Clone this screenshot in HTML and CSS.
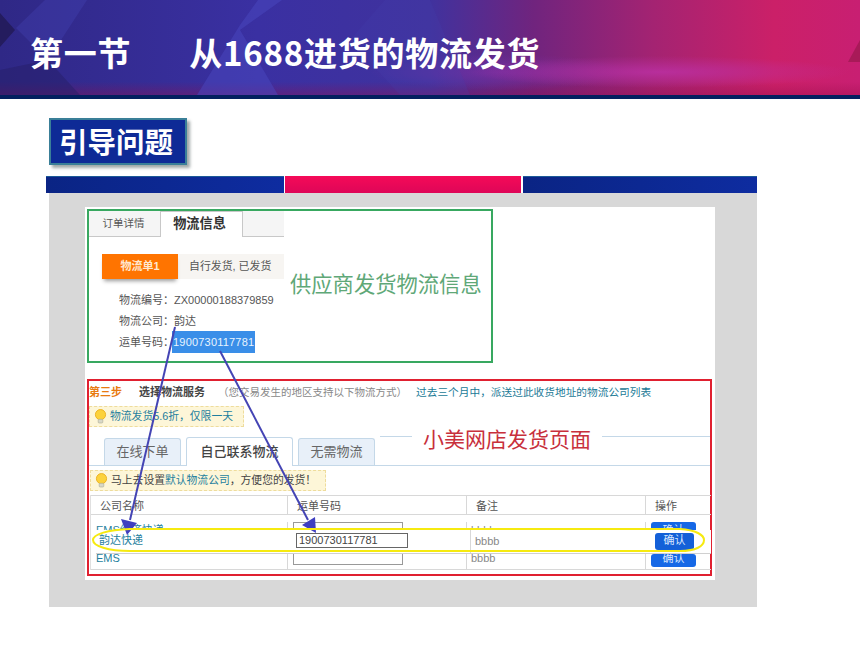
FILE: index.html
```html
<!DOCTYPE html>
<html lang="zh-CN">

<head>
  <meta charset="utf-8">
  <title>从1688进货的物流发货</title>
  <link rel="stylesheet" href="styles.css">
</head>

<body>
  <header class="banner">
    <svg class="banner-art" viewBox="0 0 860 95" preserveAspectRatio="none">
      <polygon points="0,13 15,30 0,47" fill="#241c5e" />
      <polygon points="16,28 45,0 87,0 48,60" fill="#4a48bc" opacity="0.3" />
      <polygon points="48,60 80,95 0,95 0,70" fill="#251d68" opacity="0.5" />
      <polygon points="258,0 240,25 197,95 278,95 240,30 282,0" fill="#4a48c0" opacity="0.5" />
      <polygon points="385,0 430,0 470,95 400,95 350,40" fill="#4642b0" opacity="0.2" />
      <polygon points="860,40 860,62 848,62" fill="#a81a58" />
    </svg>
    <h1 class="banner-title"><span class="banner-no">第一节</span>从1688进货的物流发货</h1>
  </header>

  <div class="tag">引导问题</div>

  <div class="strip">
    <div class="strip-blue"></div>
    <div class="strip-red"></div>
    <div class="strip-blue strip-last"></div>
  </div>

  <main class="panel">
    <div class="shot">
      <section class="supplier">
        <div class="order">
          <div class="order-tabs">
            <div class="order-tab">订单详情</div>
            <div class="order-tab order-tab-on">物流信息</div>
            <div class="order-tab-rest"></div>
          </div>
          <div class="waybill">
            <div class="waybill-no">物流单1</div>
            <div class="waybill-state">自行发货, 已发货</div>
          </div>
          <div class="info">物流编号：ZX00000188379859</div>
          <div class="info">物流公司：韵达</div>
          <div class="info">运单号码：<span class="picked">1900730117781</span></div>
        </div>
        <div class="note-green">供应商发货物流信息</div>
      </section>

      <section class="shop">
        <div class="step">
          <b class="step-no">第三步</b>
          <b class="step-name">选择物流服务</b>
          <span class="step-hint">（您交易发生的地区支持以下物流方式）</span>
          <span class="step-link">过去三个月中，派送过此收货地址的物流公司列表</span>
        </div>

        <div class="tip tip-first">
          <svg class="bulb" viewBox="0 0 14 16"><circle cx="7" cy="6" r="5.5" fill="#fcd23c" stroke="#eab020" /><rect x="4.5" y="11" width="5" height="4" rx="1" fill="#d8d8c8" stroke="#a8a890" stroke-width="0.6" /></svg>
          <span class="teal">物流发货5.6折，仅限一天</span>
        </div>

        <div class="ship-tabs">
          <div class="ship-tab">在线下单</div>
          <div class="ship-tab ship-tab-on">自己联系物流</div>
          <div class="ship-tab">无需物流</div>
          <div class="caption">
            <div class="caption-line caption-short"></div>
            <div class="note-red">小美网店发货页面</div>
            <div class="caption-line"></div>
          </div>
        </div>

        <div class="tip tip-second">
          <svg class="bulb" viewBox="0 0 14 16"><circle cx="7" cy="6" r="5.5" fill="#fcd23c" stroke="#eab020" /><rect x="4.5" y="11" width="5" height="4" rx="1" fill="#d8d8c8" stroke="#a8a890" stroke-width="0.6" /></svg>
          <span>马上去设置<span class="teal">默认物流公司</span>，方便您的发货！</span>
        </div>

        <div class="table">
          <div class="row row-head">
            <div>公司名称</div>
            <div>运单号码</div>
            <div>备注</div>
            <div>操作</div>
          </div>
          <div class="row row-top">
            <div class="teal">EMS经济快递</div>
            <div><div class="field"></div></div>
            <div>bbbb</div>
            <div><div class="confirm">确认</div></div>
          </div>
          <div class="row-pasted">
            <div class="teal">韵达快递</div>
            <div><div class="field field-on">1900730117781</div></div>
            <div class="pasted-note">bbbb</div>
            <div><div class="confirm confirm-on">确认</div></div>
          </div>
          <div class="row row-end">
            <div class="teal">EMS</div>
            <div><div class="field"></div></div>
            <div>bbbb</div>
            <div><div class="confirm">确认</div></div>
          </div>
        </div>
      </section>

      <svg class="marks" viewBox="85 207 630 373">
        <path d="M175 327 L130 520" class="arrow-line" />
        <polygon points="127,535 121,519 137,523" class="arrow-head" />
        <path d="M220 351 L308 520" class="arrow-line" />
        <polygon points="316,533 302,525 315,517" class="arrow-head" />
        <path d="M130 529 L680 529 C696 530 704 535 704 540 C704 546 696 551 680 551 L130 551 C108 551 93 546 93 540 C93 534 108 530 130 529 Z" class="ring" />
      </svg>
    </div>
  </main>
</body>
</html>
```

FILE: styles.css
```css
body {
  margin: 0;
  padding: 0;
  background: #fff;
  font-family: "Noto Sans CJK SC", "Liberation Sans", sans-serif;
  overflow: hidden;
}

/* top banner */
.banner {
  position: relative;
  box-sizing: border-box;
  height: 99px;
  border-bottom: 4px solid #03205f;
  background:
    radial-gradient(ellipse 190px 16px at 660px 72px, rgba(190, 50, 170, 0.75), transparent),
    radial-gradient(ellipse 130px 18px at 500px 72px, rgba(130, 50, 170, 0.6), transparent),
    linear-gradient(180deg, transparent 86%, rgba(150, 10, 70, 0.35) 100%),
    linear-gradient(90deg, #2f2886 0%, #3a30a2 30%, #40329e 50%, #70247e 62%, #a42372 76%, #cb2068 90%, #c81f72 100%);
}
.banner-art {
  position: absolute;
  left: 0;
  top: 0;
  width: 860px;
  height: 95px;
}
.banner-title {
  position: relative;
  margin: 0;
  padding: 28px 0 0 30px;
  font-size: 33px;
  line-height: 48px;
  font-weight: 700;
  letter-spacing: 0.75px;
  color: #fff;
  white-space: nowrap;
}
.banner-no {
  margin-right: 58px;
}

/* section tag */
.tag {
  box-sizing: border-box;
  width: 138px;
  height: 47px;
  margin: 19px 0 11px 49px;
  padding-right: 4px;
  border: 2px solid #3a7f98;
  background: #0e2a96;
  box-shadow: 3px 3px 3px #a0a8a8;
  color: #fff;
  font-size: 28.5px;
  font-weight: 700;
  line-height: 41px;
  text-align: center;
}

/* coloured strip over the panel */
.strip {
  display: flex;
  width: 711px;
  height: 17px;
  margin-left: 46px;
}
.strip-blue {
  flex: 0 0 238px;
  background: linear-gradient(90deg, #0a2484, #0e2ca0);
  border-top: 1px solid #1c5a98;
  box-sizing: border-box;
}
.strip-red {
  flex: 0 0 236px;
  margin: 0 2px 0 1px;
  background: linear-gradient(180deg, #f50a58, #de0658);
}
.strip-last {
  flex: 1;
}

.panel {
  box-sizing: border-box;
  width: 708px;
  height: 414px;
  margin-left: 49px;
  padding: 14px 42px 27px 36px;
  background: #d8d8d8;
}
.shot {
  position: relative;
  box-sizing: border-box;
  width: 630px;
  height: 373px;
  padding: 2px;
  background: #fff;
  font-family: "Liberation Sans", "Noto Sans CJK SC", sans-serif;
  font-size: 11px;
  color: #555;
}

/* green box */
.supplier {
  display: flex;
  box-sizing: border-box;
  width: 406px;
  height: 154px;
  border: 2px solid #38a860;
}
.order {
  width: 195px;
}
.order-tabs {
  display: flex;
  height: 26px;
}
.order-tab {
  box-sizing: border-box;
  width: 71px;
  padding-right: 2px;
  border-bottom: 1px solid #c8c8c8;
  background: #f5f5f5;
  text-align: center;
  line-height: 25px;
  font-size: 10.5px;
}
.order-tab-on {
  width: 83px;
  padding-right: 4px;
  border: 1px solid #c8c8c8;
  border-bottom: 0;
  background: #fff;
  color: #333;
  font-size: 13.2px;
  font-weight: 700;
  line-height: 23px;
}
.order-tab-rest {
  flex: 1;
  border-bottom: 1px solid #c8c8c8;
  background: #f5f5f5;
}
.waybill {
  display: flex;
  height: 25px;
  margin: 17px 0 10px 13px;
  background: #f7f5f2;
  line-height: 25px;
}
.waybill-no {
  width: 76px;
  background: #ff7400;
  box-shadow: 0 4px 4px -2px #999;
  color: #ffe8d0;
  font-weight: 700;
  text-align: center;
}
.waybill-state {
  padding-left: 11px;
  font-size: 10.9px;
}
.info {
  height: 21px;
  padding-left: 30px;
  line-height: 22px;
  font-size: 11px;
  white-space: nowrap;
}
.picked {
  display: inline-block;
  margin-left: -2px;
  padding: 0 1px;
  background: #3a8ee8;
  color: #e8f4ff;
  letter-spacing: 0.2px;
}
.note-green {
  margin: 58px 0 0 6px;
  color: #5fa878;
  font-family: "Noto Sans CJK SC", sans-serif;
  font-size: 21.3px;
  line-height: 28px;
  white-space: nowrap;
}

/* red box */
.shop {
  box-sizing: border-box;
  width: 625px;
  height: 197px;
  margin-top: 16px;
  border: 2px solid #e02030;
}
.step {
  display: flex;
  height: 22px;
  line-height: 22px;
  white-space: nowrap;
}
.step-no {
  width: 50px;
  color: #e87a10;
}
.step-name {
  width: 79px;
  color: #444;
}
.step-hint {
  width: 198px;
  color: #888;
  font-size: 10.5px;
}
.step-link {
  color: #1a7a96;
  font-size: 10.7px;
}
.teal {
  color: #1f7f9e;
}
.tip {
  display: flex;
  align-items: center;
  gap: 3px;
  box-sizing: border-box;
  height: 21px;
  padding-left: 4px;
  background: #fdf6d8;
  border: 1px dashed #eedc9c;
  line-height: 19px;
  white-space: nowrap;
}
.tip-first {
  width: 155px;
  margin: 3px 0 0 0;
  font-size: 10.8px;
}
.tip-second {
  width: 236px;
  margin: 4px 0 0 1px;
  color: #444;
  font-size: 10.8px;
}
.bulb {
  width: 13px;
  height: 15px;
  flex: none;
}
.ship-tabs {
  display: flex;
  align-items: flex-end;
  height: 34px;
  margin-top: 4px;
  padding-left: 15px;
  border-bottom: 1px solid #c4d8e8;
}
.ship-tab {
  box-sizing: border-box;
  width: 77px;
  height: 27px;
  margin-right: 5px;
  border: 1px solid #c4d8e8;
  border-bottom: 0;
  border-radius: 3px 3px 0 0;
  background: #e8f0f9;
  color: #666;
  font-size: 13px;
  line-height: 26px;
  text-align: center;
}
.ship-tab-on {
  width: 107px;
  height: 29px;
  margin-bottom: -1px;
  background: #fff;
  color: #444;
  font-weight: 500;
  line-height: 28px;
}
.caption {
  flex: 1;
  display: flex;
  align-self: flex-start;
  align-items: flex-start;
  height: 20px;
}
.caption-line {
  flex: 1;
  height: 1px;
  margin-top: 5px;
  background: #c4d8e8;
}
.caption-short {
  flex: 0 0 32px;
}
.note-red {
  margin: -3px 11px 0;
  color: #c8303c;
  font-family: "Noto Sans CJK SC", sans-serif;
  font-size: 21px;
  line-height: 20px;
  white-space: nowrap;
}

/* table */
.table {
  width: 620px;
  margin: 4px 0 0 1px;
  border-left: 1px solid #e0e0e0;
  color: #555;
}
.row {
  display: grid;
  grid-template-columns: 196px 179px 179px 65px;
  box-sizing: border-box;
  overflow: hidden;
}
.row > div {
  box-sizing: border-box;
  border-left: 1px solid #d8d8d8;
}
.row > div:first-child {
  border-left: 0;
}
.row-head {
  height: 20px;
  border-top: 1px solid #d8d8d8;
  border-bottom: 1px solid #d8d8d8;
  line-height: 20px;
}
.row-head > div {
  padding-left: 9px;
}
.row-top {
  height: 15px;
  padding-top: 7px;
  line-height: 16px;
  color: #888;
}
.row-top > div, .row-end > div {
  padding-left: 5px;
}
.row-top > div:nth-child(3), .row-end > div:nth-child(3) {
  padding-left: 4px;
}
.row-pasted {
  display: grid;
  grid-template-columns: 200px 174px 185px 59px;
  box-sizing: border-box;
  height: 24px;
  margin-left: 5px;
  border-bottom: 1px solid #d0d0d0;
  background: #fff;
  font-size: 11px;
  line-height: 20px;
  color: #888;
}
.row-pasted > div:first-child {
  padding-left: 3px;
}
.pasted-note {
  padding-left: 4px;
  border-left: 1px solid #d8d8d8;
  line-height: 22px;
}
.row-end {
  height: 16px;
  border-bottom: 1px solid #d8d8d8;
  line-height: 9px;
  color: #888;
}
.field {
  box-sizing: border-box;
  width: 110px;
  height: 24px;
  border: 1px solid #999;
}
.row-end .field {
  height: 11px;
  border-top: 0;
}
.field-on {
  width: 112px;
  height: 15px;
  margin-top: 3px;
  border-color: #666;
  padding-left: 2px;
  font-size: 11px;
  line-height: 13px;
  color: #444;
}
.confirm {
  width: 45px;
  height: 22px;
  border-radius: 3px;
  background: #1668e6;
  color: #dbe8ff;
  font-size: 11px;
  line-height: 16px;
  text-align: center;
}
.row-end .confirm {
  height: 13px;
  line-height: 8px;
}
.confirm-on {
  width: 39px;
  height: 17px;
  margin-top: 3px;
  background: #1460d8;
  line-height: 15px;
}

/* arrows and the ring lie over the picture */
.marks {
  position: absolute;
  left: 0;
  top: 0;
  width: 630px;
  height: 373px;
  pointer-events: none;
}
.arrow-line {
  fill: none;
  stroke: #4444b4;
  stroke-width: 2;
}
.arrow-head {
  fill: #3f3fc0;
}
.ring {
  fill: none;
  stroke: #f6ea10;
  stroke-width: 2;
}
```
